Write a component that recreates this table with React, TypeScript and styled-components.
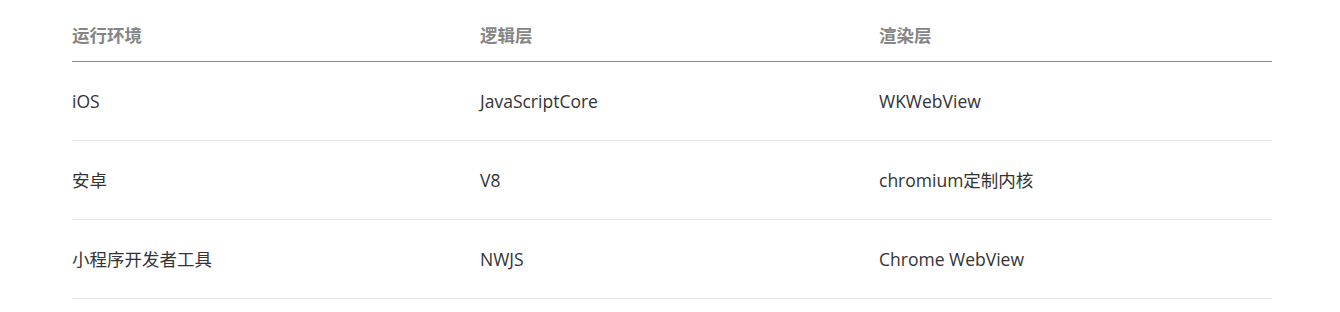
import React from 'react'
import styled, { createGlobalStyle } from 'styled-components'

const GlobalStyle = createGlobalStyle`
  body {
    margin: 0;
    background: #fff;
    font-family: 'Segoe UI', 'Open Sans', 'Noto Sans CJK SC', sans-serif;
  }
`

const Page = styled.div`
  padding: 11px 68px 0 72px;
`

const Table = styled.div`
  display: grid;
  grid-template-columns: 408px 399px 1fr;
`

const Row = styled.div`
  display: contents;
`

const Cell = styled.div<{ $head?: boolean }>`
  font-size: 17.5px;
  line-height: 26px;
  padding: ${(p) => (p.$head ? '11px 0 13px' : '26px 0')};
  color: ${(p) => (p.$head ? '#858585' : '#333')};
  font-weight: ${(p) => (p.$head ? 700 : 400)};
  border-bottom: 1px solid ${(p) => (p.$head ? '#8c8c8c' : '#e6e6e6')};
  white-space: nowrap;
`

const head = ['运行环境', '逻辑层', '渲染层']

const rows = [
  ['iOS', 'JavaScriptCore', 'WKWebView'],
  ['安卓', 'V8', 'chromium定制内核'],
  ['小程序开发者工具', 'NWJS', 'Chrome WebView'],
]

export default function App() {
  return (
    <Page>
      <GlobalStyle />
      <Table>
        <Row>
          {head.map((h) => (
            <Cell $head key={h}>
              {h}
            </Cell>
          ))}
        </Row>
        {rows.map((r) => (
          <Row key={r[0]}>
            {r.map((c) => (
              <Cell key={c}>{c}</Cell>
            ))}
          </Row>
        ))}
      </Table>
    </Page>
  )
}
